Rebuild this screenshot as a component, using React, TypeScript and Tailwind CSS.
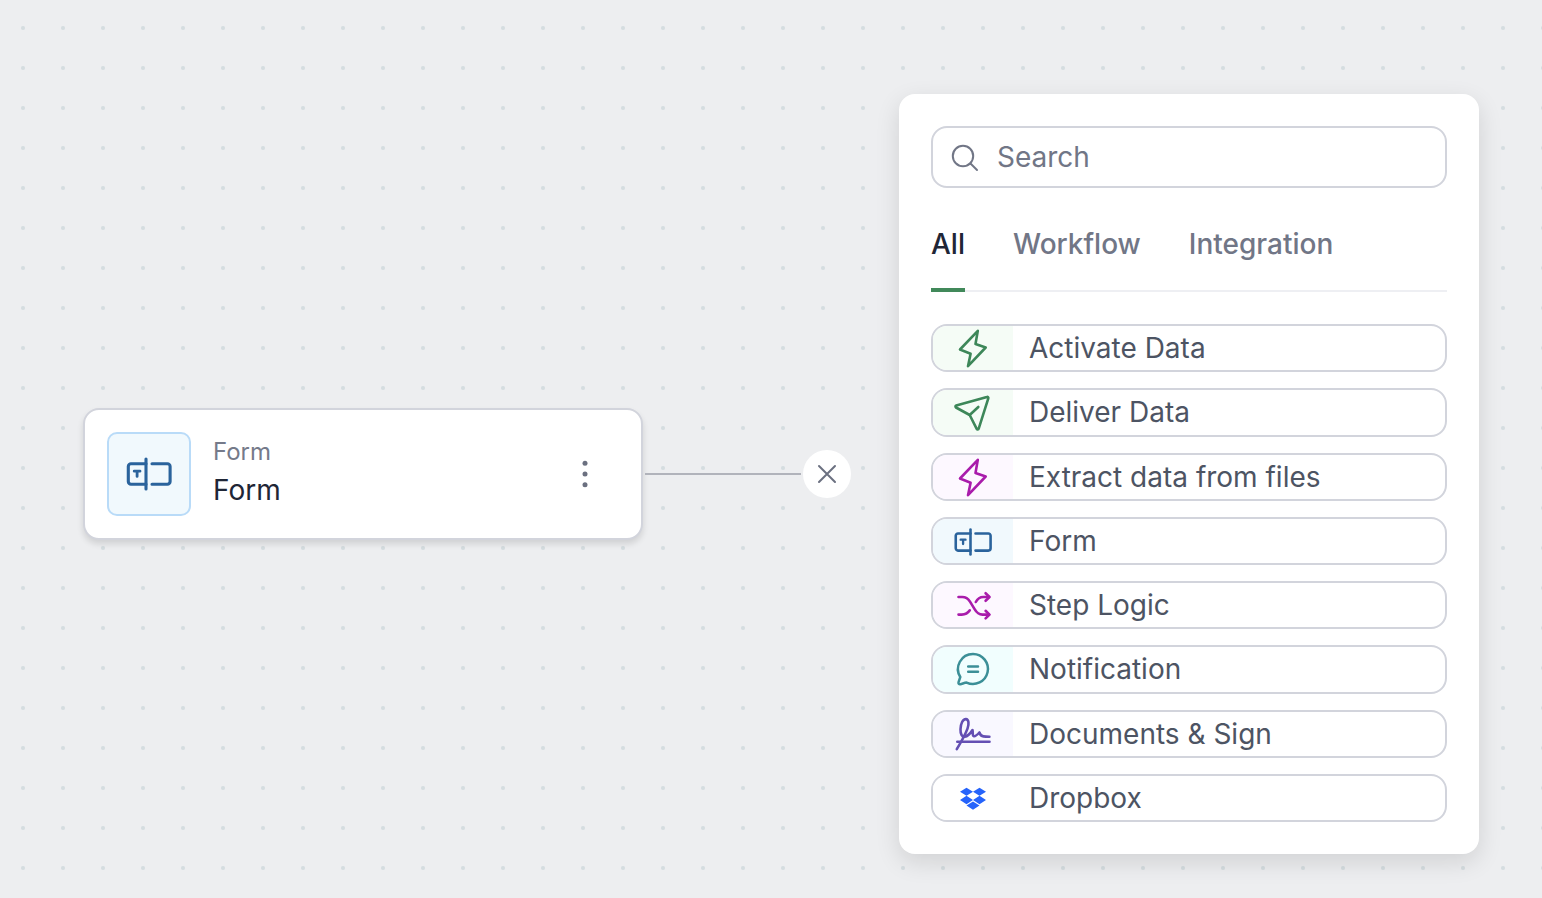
import React, { useState } from 'react';
import clsx from 'clsx';

type Category = 'Workflow' | 'Integration';

interface StepOption {
  name: string;
  category: Category;
  tile: string;
  icon: React.ReactNode;
}

const strokeProps = {
  fill: 'none',
  stroke: 'currentColor',
  strokeLinecap: 'round',
  strokeLinejoin: 'round',
  'aria-hidden': true,
} as const;

const FormIcon = ({ className }: { className: string }) => (
  <svg viewBox="0 0 48 48" strokeWidth="3.1" className={className} {...strokeProps}>
    <path d="M21 13.7H6a2.7 2.7 0 0 0-2.7 2.7v15.2A2.7 2.7 0 0 0 6 34.3h15" />
    <path d="M21 9v30" />
    <path d="M27 13.7h15.4a2.7 2.7 0 0 1 2.7 2.7v15.2a2.7 2.7 0 0 1-2.7 2.700H27" />
    <path d="M9.200 21.200h5.800M12.100 21.200v5.200" strokeWidth="2.800" />
  </svg>
);

const BoltIcon = () => (
  <svg viewBox="0 0 40 40" strokeWidth="2.6" className="size-10" {...strokeProps}>
    <path d="M24.800 1.800 7 20.500l10.600 4.200L15 37.200l17.700-18.700-10.200-3.500Z" />
  </svg>
);

const PlaneIcon = () => (
  <svg viewBox="0 0 40 40" strokeWidth="2.6" className="size-10" {...strokeProps}>
    <path d="M33.900 3.900 3.200 12.500a1.100 1.100 0 0 0-.2 2L16.700 22l7 13.900a1.100 1.100 0 0 0 2-.2L35.300 5.300a1.100 1.100 0 0 0-1.400-1.400Z" />
    <path d="m16.700 22 8.600-8" />
  </svg>
);

const ShuffleIcon = () => (
  <svg viewBox="0 0 40 40" strokeWidth="2.6" className="size-10" {...strokeProps}>
    <path d="M5.500 11h3.700c3.600 0 6 1.600 7.800 4.600l4.600 7.500c2 3.500 4.200 5.500 7.900 5.500h6.500" />
    <path d="M5.500 28.600h3.200c3.700 0 6.200-1.400 8.100-4.300" />
    <path d="M22.800 16c1.700-3.200 4-5 7.400-5H36" />
    <path d="m32.600 7.200 3.900 3.800-3.900 3.800M32.600 24.800l3.900 3.800-3.900 3.800" />
  </svg>
);

const MessageIcon = () => (
  <svg viewBox="0 0 40 40" strokeWidth="2.5" className="size-10" {...strokeProps}>
    <path d="M20 4a15 15 0 1 1-6.400 28.600c-2.200.1-4.200 1.200-6.300 1.600-1.200.2-2.100-.6-1.800-1.800L7.300 27A15 15 0 0 1 20 4Z" />
    <path d="M15.200 16.500H25M15.200 21.800H25" />
  </svg>
);

const SignatureIcon = () => (
  <svg viewBox="0 0 40 40" strokeWidth="2.6" className="size-10" {...strokeProps}>
    <path d="M3.800 34.200C7.500 28 12.300 19.500 14.500 13.600c1.700-4.800 1.300-9.300-1.600-9.500-3-.1-5.300 4.500-5.400 10.100-.1 4.700 1.400 8 4.200 7.600 3-.5 5.800-3.600 7.800-6.800.6 2.600-.4 5.900 1.400 6.200 1.800.2 3.700-1.700 5.500-3.700.8 2.400 2 3.700 4 3.900 2.100.3 4 .3 6 .3" />
    <path d="M4.300 26.700h32.200" />
  </svg>
);

const DropboxIcon = () => (
  <svg viewBox="0 0 24 24" fill="currentColor" aria-hidden="true" className="h-7 w-[26px]">
    <path d="m6 1.500-6 3.800 6 3.800 6-3.800zM18 1.500l-6 3.800 6 3.800 6-3.800zM0 13l6 3.800 6-3.800-6-3.900zM18 9.100 12 13l6 3.800 6-3.800zM6 18.100l6 3.800 6-3.800-6-3.800z" />
  </svg>
);

const steps: StepOption[] = [
  { name: 'Activate Data', category: 'Workflow', tile: 'bg-[#f5fcf6] text-[#3d8759]', icon: <BoltIcon /> },
  { name: 'Deliver Data', category: 'Workflow', tile: 'bg-[#f5fcf6] text-[#3d8759]', icon: <PlaneIcon /> },
  { name: 'Extract data from files', category: 'Workflow', tile: 'bg-[#fdf8ff] text-[#a91cab]', icon: <BoltIcon /> },
  { name: 'Form', category: 'Workflow', tile: 'bg-[#f1f9fd] text-[#2a639c]', icon: <FormIcon className="size-10" /> },
  { name: 'Step Logic', category: 'Workflow', tile: 'bg-[#fdf8ff] text-[#a91cab]', icon: <ShuffleIcon /> },
  { name: 'Notification', category: 'Workflow', tile: 'bg-[#f1fefe] text-[#3b8f97]', icon: <MessageIcon /> },
  { name: 'Documents & Sign', category: 'Workflow', tile: 'bg-[#f9f8ff] text-[#644fb3]', icon: <SignatureIcon /> },
  { name: 'Dropbox', category: 'Integration', tile: 'bg-white text-[#2563fb]', icon: <DropboxIcon /> },
];

const tabs = ['All', 'Workflow', 'Integration'] as const;

const FormNode = () => (
  <article className="flex w-[560px] shrink-0 items-center gap-[22px] rounded-2xl border-2 border-[#d2d4dc] bg-white p-[22px] shadow-[0_4px_6px_rgba(0,0,0,0.12)]">
    <div className="flex size-[84px] items-center justify-center rounded-[10px] border-2 border-[#b9dbf8] bg-[#f1f9fd] text-[#2a639c]">
      <FormIcon className="size-12" />
    </div>
    <div className="flex-1 pb-1">
      <p className="text-2xl leading-9 text-[#757a8a]">Form</p>
      <h2 className="text-[28px] leading-10 text-[#1f2636]">Form</h2>
    </div>
    <button type="button" aria-label="Step options" className="mr-2.5 flex size-12 items-center justify-center text-[#6b7080]">
      <svg viewBox="0 0 48 48" fill="currentColor" aria-hidden="true" className="size-12">
        <circle cx="24" cy="13.300" r="2.500" />
        <circle cx="24" cy="24" r="2.500" />
        <circle cx="24" cy="34.700" r="2.500" />
      </svg>
    </button>
  </article>
);

const StepPicker = () => {
  const [activeTab, setActiveTab] = useState<(typeof tabs)[number]>('All');
  const [query, setQuery] = useState('');

  const visibleSteps = steps.filter(
    (step) =>
      (activeTab === 'All' || step.category === activeTab) &&
      step.name.toLowerCase().includes(query.toLowerCase())
  );

  return (
    <aside className="ml-12 w-[580px] shrink-0 rounded-2xl bg-white p-8 shadow-[0_8px_24px_rgba(0,0,0,0.12)]">
      <label className="flex items-center gap-4 rounded-2xl border-2 border-[#d2d4dc] px-4 py-[9px] text-[#717686]">
        <svg viewBox="0 0 32 32" strokeWidth="2" className="size-8 shrink-0" {...strokeProps}>
          <circle cx="14" cy="15" r="10.200" />
          <path d="m21.500 22.500 6.500 6.500" />
        </svg>
        <input
          type="text"
          aria-label="Search"
          placeholder="Search"
          value={query}
          onChange={(e) => setQuery(e.target.value)}
          className="h-10 min-w-0 flex-1 bg-transparent text-[28px] outline-none placeholder:text-[#717686]"
        />
      </label>

      <div role="tablist" className="mt-9 flex gap-12 shadow-[inset_0_-2px_0_#eeeff3]">
        {tabs.map((tab) => (
          <button
            key={tab}
            type="button"
            role="tab"
            aria-selected={tab === activeTab}
            onClick={() => setActiveTab(tab)}
            className={clsx(
              'border-b-4 pb-6 text-[28px] leading-10 font-medium',
              tab === activeTab ? 'border-[#41895a] text-[#1f2636]' : 'border-transparent text-[#717686]'
            )}
          >
            {tab}
          </button>
        ))}
      </div>

      {/* Available steps */}
      <ul className="mt-8 grid min-h-[498px] auto-rows-fr gap-4">
        {visibleSteps.map((step) => (
          <li key={step.name} className="flex">
            <button
              type="button"
              className="flex w-full items-stretch overflow-hidden rounded-2xl border-2 border-[#d2d4dc] bg-white text-left"
            >
              <span className={clsx('flex w-20 shrink-0 items-center justify-center pt-0.5', step.tile)}>{step.icon}</span>
              <span className="self-center pl-4 text-[28px] leading-10 text-[#4d5463]">{step.name}</span>
            </button>
          </li>
        ))}
      </ul>
    </aside>
  );
};

const App = () => {
  return (
    <main className="flex min-h-screen items-center bg-[#edeef0] bg-[radial-gradient(circle,#d5dde0_1.5px,transparent_2.5px)] bg-size-[40px_40px] bg-position-[3px_8px] pt-[50px] pr-[63px] pl-[83px] font-['Inter',sans-serif]">
      <FormNode />
      <div className="mx-0.5 h-0.5 min-w-8 flex-1 bg-[#b1b3bb]" />
      <button
        type="button"
        aria-label="Close step picker"
        className="flex size-12 shrink-0 items-center justify-center rounded-full bg-white text-[#6b7080]"
      >
        <svg viewBox="0 0 24 24" strokeWidth="2" className="size-6" {...strokeProps}>
          <path d="m4 4 16 16M20 4 4 20" />
        </svg>
      </button>
      <StepPicker />
    </main>
  );
};

export default App;
